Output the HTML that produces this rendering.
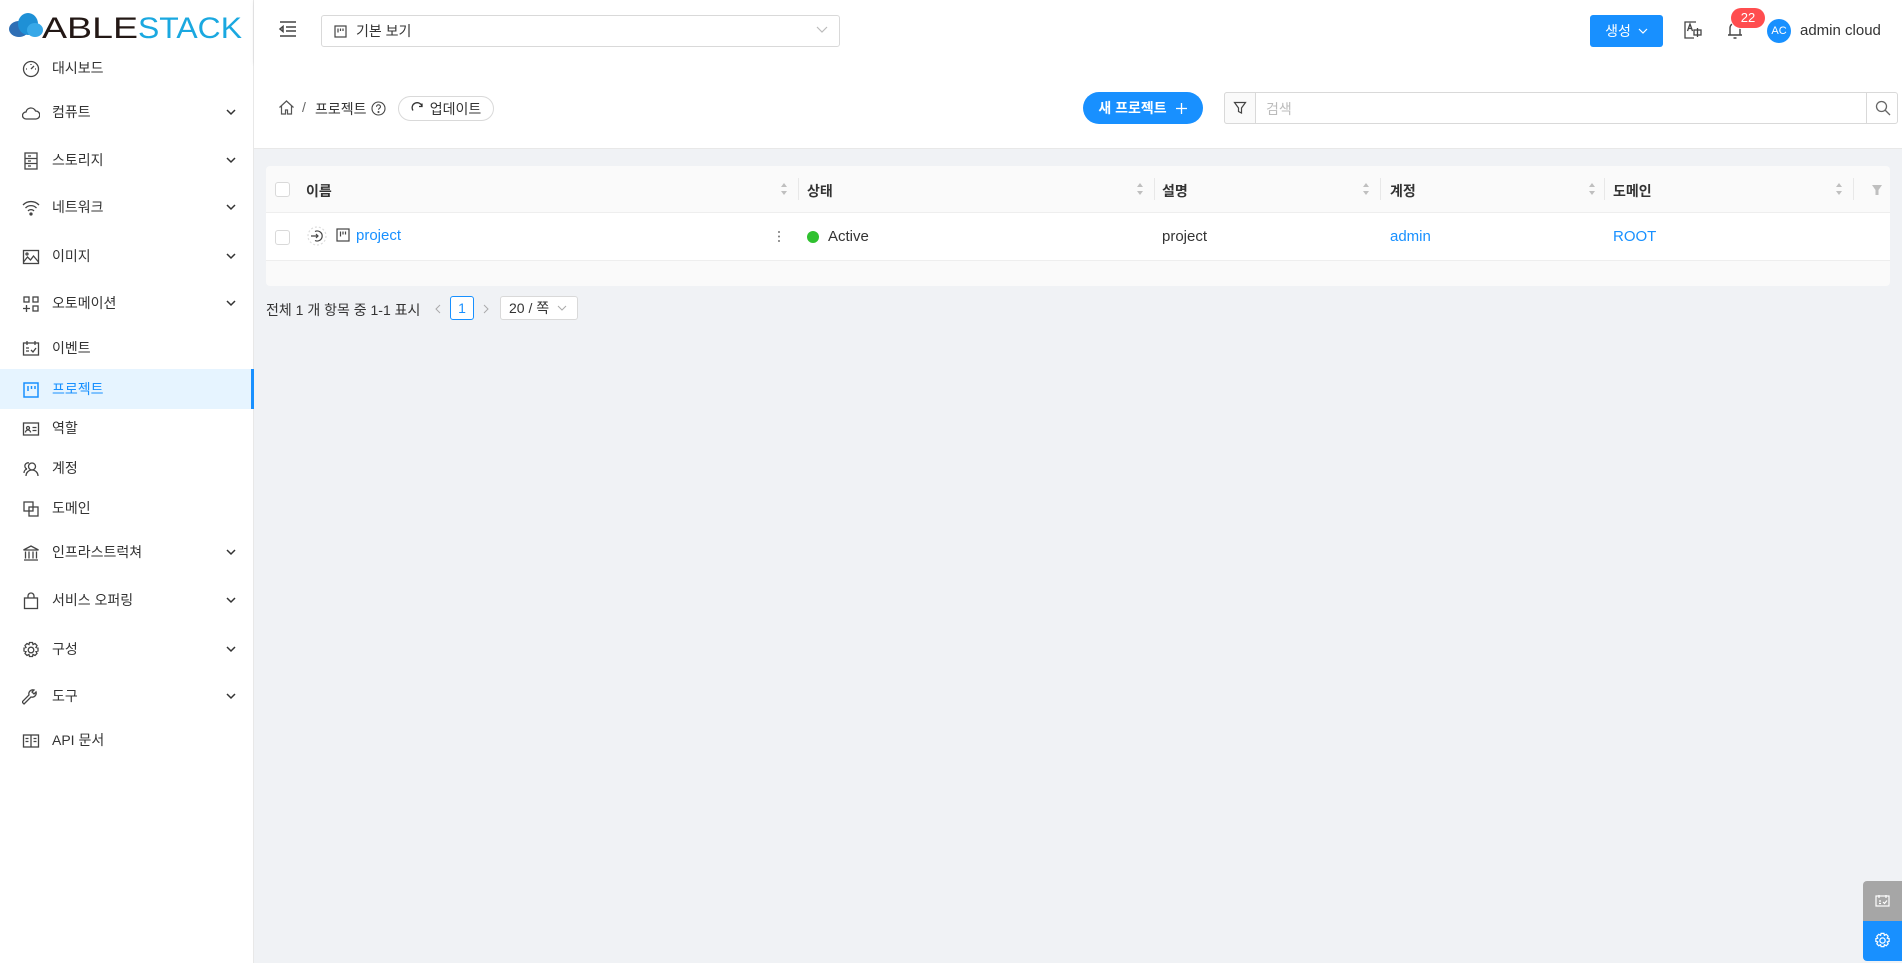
<!DOCTYPE html>
<html><head><meta charset="utf-8"><style>
*{box-sizing:border-box;margin:0;padding:0}
body{width:1902px;height:963px;background:#f0f2f5;font-family:"Liberation Sans","Noto Sans CJK KR",sans-serif;font-size:14px;color:#333;position:relative;overflow:hidden}
.a{position:absolute}
.side{left:0;top:0;width:254px;height:963px;background:#fff;border-right:1px solid #e8e8e8}
.it{position:absolute;left:0;width:254px;height:40px;display:flex;align-items:center;padding-left:52px;color:#333;font-size:14px}
.it svg.ic{position:absolute;left:22px;top:12px}
.chev{position:absolute;left:226px;top:15px}
.act{background:#e6f4ff;color:#1890ff;border-right:3px solid #1890ff}
.hdr{left:254px;top:0;width:1648px;height:63px;background:#fff;box-shadow:0 1px 4px rgba(0,21,41,.08)}
.blue{color:#1890ff}
</style></head><body>
<div class="a side">
 <div class="a" style="left:6px;top:10px;width:240px;height:30px">
  <svg width="240" height="30" viewBox="0 0 240 30"><ellipse cx="13" cy="19" rx="10" ry="8" fill="#2f6fb5"/><ellipse cx="22" cy="14" rx="10" ry="11" fill="#1e90d6"/><ellipse cx="29" cy="20" rx="8" ry="7" fill="#37a8e8"/>
  <text x="36" y="28" font-family="Liberation Sans" font-size="30" fill="#231815" textLength="96" lengthAdjust="spacingAndGlyphs">ABLE</text><text x="132" y="28" font-family="Liberation Sans" font-size="30" fill="#1aa8e0" textLength="104" lengthAdjust="spacingAndGlyphs">STACK</text></svg>
 </div>
 <div class="it" style="top:48px"><svg class="ic" width="18" height="18" viewBox="0 0 18 18" fill="none" stroke="#444" stroke-width="1.3"><circle cx="9" cy="9" r="7.5"/><path d="M9 9l3-3M4 9h1M13 9h1M9 4v1"/></svg>대시보드</div>
 <div class="it" style="top:92px"><svg class="ic" width="18" height="18" viewBox="0 0 18 18" fill="none" stroke="#444" stroke-width="1.3"><path d="M4 15a3.5 3.5 0 010-7 5 5 0 019.5-1A4 4 0 0114 15z"/></svg>컴퓨트<svg class="chev" width="10" height="10" viewBox="0 0 10 10"><path d="M1 3l4 4 4-4" stroke="#333" stroke-width="1.5" fill="none"/></svg></div>
 <div class="it" style="top:140px"><svg class="ic" width="18" height="18" viewBox="0 0 18 18" fill="none" stroke="#444" stroke-width="1.3"><rect x="3" y="1" width="12" height="16"/><path d="M3 6.5h12M3 11.5h12M6 4h3M6 9h3M6 14h3"/></svg>스토리지<svg class="chev" width="10" height="10" viewBox="0 0 10 10"><path d="M1 3l4 4 4-4" stroke="#333" stroke-width="1.5" fill="none"/></svg></div>
 <div class="it" style="top:187px"><svg class="ic" width="18" height="18" viewBox="0 0 18 18" fill="none" stroke="#444" stroke-width="1.3"><path d="M1 6a11 11 0 0116 0M3.5 9a7.5 7.5 0 0111 0M6 12a4 4 0 016 0"/><circle cx="9" cy="15" r="1" fill="#444"/></svg>네트워크<svg class="chev" width="10" height="10" viewBox="0 0 10 10"><path d="M1 3l4 4 4-4" stroke="#333" stroke-width="1.5" fill="none"/></svg></div>
 <div class="it" style="top:236px"><svg class="ic" width="18" height="18" viewBox="0 0 18 18" fill="none" stroke="#444" stroke-width="1.3"><rect x="1.5" y="2.5" width="15" height="13"/><path d="M1.5 14l4-5 3 3 3-4 5 6"/><circle cx="5" cy="6" r="1"/></svg>이미지<svg class="chev" width="10" height="10" viewBox="0 0 10 10"><path d="M1 3l4 4 4-4" stroke="#333" stroke-width="1.5" fill="none"/></svg></div>
 <div class="it" style="top:283px"><svg class="ic" width="18" height="18" viewBox="0 0 18 18" fill="none" stroke="#444" stroke-width="1.3"><rect x="2" y="2" width="5" height="5"/><rect x="11" y="2" width="5" height="5"/><rect x="11" y="11" width="5" height="5"/><path d="M4.5 10v7M1 13.5h7"/></svg>오토메이션<svg class="chev" width="10" height="10" viewBox="0 0 10 10"><path d="M1 3l4 4 4-4" stroke="#333" stroke-width="1.5" fill="none"/></svg></div>
 <div class="it" style="top:328px"><svg class="ic" width="18" height="18" viewBox="0 0 18 18" fill="none" stroke="#444" stroke-width="1.3"><rect x="1.5" y="3" width="15" height="12"/><path d="M5 1v4M13 1v4M4 8h3M4 11h3M9 10l2 2 3-4"/></svg>이벤트</div>
 <div class="it act" style="top:369px"><svg class="ic" width="18" height="18" viewBox="0 0 18 18" fill="none" stroke="#1890ff" stroke-width="1.5"><rect x="2" y="2" width="14" height="14"/><path d="M6 5v5M9.5 5v3M13 5v3"/></svg>프로젝트</div>
 <div class="it" style="top:408px"><svg class="ic" width="18" height="18" viewBox="0 0 18 18" fill="none" stroke="#444" stroke-width="1.3"><rect x="1.5" y="3" width="15" height="12"/><circle cx="6" cy="8" r="1.5"/><path d="M3.5 12.5a2.5 2.5 0 015 0M10.5 7.5h4M10.5 10.5h4"/></svg>역할</div>
 <div class="it" style="top:448px"><svg class="ic" width="18" height="18" viewBox="0 0 18 18" fill="none" stroke="#444" stroke-width="1.3"><circle cx="10" cy="6.5" r="3.5"/><path d="M4 16a6 6 0 0112 0M5 9a3 3 0 012-6M2 13a4 4 0 013-4"/></svg>계정</div>
 <div class="it" style="top:488px"><svg class="ic" width="18" height="18" viewBox="0 0 18 18" fill="none" stroke="#444" stroke-width="1.3"><rect x="2" y="2" width="9" height="9"/><rect x="7" y="7" width="9" height="9"/></svg>도메인</div>
 <div class="it" style="top:532px"><svg class="ic" width="18" height="18" viewBox="0 0 18 18" fill="none" stroke="#444" stroke-width="1.3"><path d="M1.5 6L9 2l7.5 4zM2 16h14M3.5 7.5v7M7 7.5v7M11 7.5v7M14.5 7.5v7"/></svg>인프라스트럭쳐<svg class="chev" width="10" height="10" viewBox="0 0 10 10"><path d="M1 3l4 4 4-4" stroke="#333" stroke-width="1.5" fill="none"/></svg></div>
 <div class="it" style="top:580px"><svg class="ic" width="18" height="18" viewBox="0 0 18 18" fill="none" stroke="#444" stroke-width="1.3"><rect x="2.5" y="6" width="13" height="10.5"/><path d="M6 6V4a3 3 0 016 0v2"/></svg>서비스 오퍼링<svg class="chev" width="10" height="10" viewBox="0 0 10 10"><path d="M1 3l4 4 4-4" stroke="#333" stroke-width="1.5" fill="none"/></svg></div>
 <div class="it" style="top:629px"><svg class="ic" width="18" height="18" viewBox="0 0 18 18" fill="none" stroke="#444" stroke-width="1.3"><circle cx="9" cy="9" r="2.8"/><path d="M7.5 1.5h3l.5 2 2-1 2 2-1 2 2 .5v3l-2 .5 1 2-2 2-2-1-.5 2h-3l-.5-2-2 1-2-2 1-2-2-.5v-3l2-.5-1-2 2-2 2 1z"/></svg>구성<svg class="chev" width="10" height="10" viewBox="0 0 10 10"><path d="M1 3l4 4 4-4" stroke="#333" stroke-width="1.5" fill="none"/></svg></div>
 <div class="it" style="top:676px"><svg class="ic" width="18" height="18" viewBox="0 0 18 18" fill="none" stroke="#444" stroke-width="1.3"><path d="M2 16l7-7a4 4 0 005-5l-2 2-2-2 2-2a4 4 0 00-5 5l-7 7z"/></svg>도구<svg class="chev" width="10" height="10" viewBox="0 0 10 10"><path d="M1 3l4 4 4-4" stroke="#333" stroke-width="1.5" fill="none"/></svg></div>
 <div class="it" style="top:720px"><svg class="ic" width="18" height="18" viewBox="0 0 18 18" fill="none" stroke="#444" stroke-width="1.3"><rect x="1.5" y="3" width="15" height="12"/><path d="M9 3v12M3.5 6.5h3M3.5 9.5h3M11.5 6.5h3M11.5 9.5h3"/></svg>API 문서</div>
</div>

<div class="a hdr"></div>
<svg class="a" style="left:278px;top:19px" width="20" height="20" viewBox="0 0 20 20" fill="none" stroke="#444" stroke-width="1.5"><path d="M2 3h16M8 8h10M8 12h10M2 17h16M5 7.5L2 10l3 2.5z"/></svg>
<div class="a" style="left:321px;top:15px;width:519px;height:32px;border:1px solid #d9d9d9;border-radius:3px;background:#fff"></div>
<svg class="a" style="left:334px;top:25px" width="13" height="13" viewBox="0 0 13 13" fill="none" stroke="#444" stroke-width="1.2"><rect x="1" y="1" width="11" height="11"/><path d="M4 3.5v4M6.5 3.5v2.5M9 3.5v2.5"/></svg>
<div class="a" style="left:356px;top:21px;font-size:14px;color:#333">기본 보기</div>
<svg class="a" style="left:816px;top:25px" width="12" height="10" viewBox="0 0 12 10"><path d="M1 2l5 5 5-5" stroke="#bbb" fill="none" stroke-width="1.2"/></svg>

<div class="a" style="left:1590px;top:15px;width:73px;height:32px;background:#1890ff;border-radius:3px;color:#fff;display:flex;align-items:center;justify-content:center;gap:7px;font-size:14px">생성 <svg width="10" height="8" viewBox="0 0 10 8"><path d="M1 2l4 4 4-4" stroke="#fff" fill="none" stroke-width="1.2"/></svg></div>
<svg class="a" style="left:1683px;top:20px" width="20" height="20" viewBox="0 0 20 20" fill="none" stroke="#444" stroke-width="1.3"><path d="M13 2H2v16h9"/><path d="M4.5 11l2.5-7 2.5 7M5.3 8.5h3.4"/><rect x="11" y="10" width="7" height="5"/><path d="M14.5 8v9"/></svg>
<svg class="a" style="left:1726px;top:20px" width="18" height="20" viewBox="0 0 18 20" fill="none" stroke="#444" stroke-width="1.4"><path d="M4 15V8a5 5 0 0110 0v7M2 15h14M7.5 18h3"/></svg>
<div class="a" style="left:1731px;top:8px;width:34px;height:20px;background:#ff4d4f;border-radius:10px;color:#fff;font-size:13px;text-align:center;line-height:20px;box-shadow:0 0 0 1px #fff">22</div>
<div class="a" style="left:1767px;top:19px;width:24px;height:24px;border-radius:50%;background:#1890ff;color:#fff;font-size:11px;text-align:center;line-height:24px">AC</div>
<div class="a" style="left:1800px;top:22px;font-size:15px;color:#333">admin cloud</div>

<div class="a" style="left:254px;top:63px;width:1648px;height:86px;background:#fff;border-bottom:1px solid #e8e8e8"></div>
<svg class="a" style="left:278px;top:99px" width="17" height="17" viewBox="0 0 17 17" fill="none" stroke="#555" stroke-width="1.2"><path d="M1.5 8.5L8.5 2l7 6.5M3.5 7v8h4v-4h2v4h4V7"/></svg>
<div class="a" style="left:302px;top:99px;color:#666">/</div>
<div class="a" style="left:315px;top:99px;color:#333">프로젝트</div>
<svg class="a" style="left:371px;top:101px" width="15" height="15" viewBox="0 0 15 15" fill="none" stroke="#444" stroke-width="1.1"><circle cx="7.5" cy="7.5" r="6.5"/><path d="M5.5 5.8a2 2 0 114 0c0 1.4-2 1.5-2 3"/><circle cx="7.5" cy="11" r=".5" fill="#444"/></svg>
<div class="a" style="left:398px;top:96px;width:96px;height:25px;border:1px solid #d9d9d9;border-radius:13px;background:#fff;display:flex;align-items:center;justify-content:center;gap:6px;font-size:14px"><svg width="13" height="13" viewBox="0 0 13 13" fill="none" stroke="#333" stroke-width="1.3"><path d="M11 4.5A5 5 0 102 8.5M11 1.5v3H8"/></svg>업데이트</div>

<div class="a" style="left:1083px;top:92px;width:120px;height:32px;background:#1890ff;border-radius:16px;color:#fff;display:flex;align-items:center;justify-content:center;gap:8px;font-size:14px;font-weight:bold">새 프로젝트 <svg width="13" height="13" viewBox="0 0 13 13"><path d="M6.5 1v11M1 6.5h11" stroke="#fff" stroke-width="1.3"/></svg></div>
<div class="a" style="left:1224px;top:92px;width:674px;height:32px;border:1px solid #d9d9d9;border-radius:3px;background:#fff"></div>
<div class="a" style="left:1224px;top:92px;width:32px;height:32px;border:1px solid #d9d9d9;background:#fafafa;border-radius:3px 0 0 3px"></div>
<svg class="a" style="left:1233px;top:101px" width="14" height="14" viewBox="0 0 14 14" fill="none" stroke="#444" stroke-width="1.2"><path d="M1.5 1.5h11L8.5 7v5l-3-1.5V7z"/></svg>
<div class="a" style="left:1266px;top:99px;color:#bbb">검색</div>
<div class="a" style="left:1866px;top:92px;width:1px;height:32px;background:#d9d9d9"></div>
<svg class="a" style="left:1875px;top:100px" width="16" height="16" viewBox="0 0 16 16" fill="none" stroke="#666" stroke-width="1.3"><circle cx="6.5" cy="6.5" r="5"/><path d="M10 10l5 5"/></svg>

<div class="a" style="left:266px;top:166px;width:1624px;height:120px;background:#fafafa;border-radius:4px"></div>
<div class="a" style="left:266px;top:212px;width:1624px;height:49px;background:#fff;border-top:1px solid #eee;border-bottom:1px solid #eee"></div>
<div class="a" style="left:275px;top:182px;width:15px;height:15px;border:1px solid #d9d9d9;border-radius:3px;background:#fff"></div>
<div class="a" style="left:275px;top:230px;width:15px;height:15px;border:1px solid #d9d9d9;border-radius:3px;background:#fff"></div>
<div class="a" style="left:306px;top:181px;font-weight:bold;font-size:14px">이름</div>
<div class="a" style="left:807px;top:181px;font-weight:bold">상태</div>
<div class="a" style="left:1162px;top:181px;font-weight:bold">설명</div>
<div class="a" style="left:1390px;top:181px;font-weight:bold">계정</div>
<div class="a" style="left:1613px;top:181px;font-weight:bold">도메인</div>
<div class="a" style="left:798px;top:178px;width:1px;height:22px;background:#e8e8e8"></div>
<div class="a" style="left:1154px;top:178px;width:1px;height:22px;background:#e8e8e8"></div>
<div class="a" style="left:1380px;top:178px;width:1px;height:22px;background:#e8e8e8"></div>
<div class="a" style="left:1604px;top:178px;width:1px;height:22px;background:#e8e8e8"></div>
<div class="a" style="left:1853px;top:178px;width:1px;height:22px;background:#e8e8e8"></div>
<svg class="a" style="left:780px;top:182px" width="8" height="14" viewBox="0 0 8 14" fill="#bfbfbf"><path d="M4 1l3 4H1zM4 13l3-4H1z"/></svg>
<svg class="a" style="left:1136px;top:182px" width="8" height="14" viewBox="0 0 8 14" fill="#bfbfbf"><path d="M4 1l3 4H1zM4 13l3-4H1z"/></svg>
<svg class="a" style="left:1362px;top:182px" width="8" height="14" viewBox="0 0 8 14" fill="#bfbfbf"><path d="M4 1l3 4H1zM4 13l3-4H1z"/></svg>
<svg class="a" style="left:1588px;top:182px" width="8" height="14" viewBox="0 0 8 14" fill="#bfbfbf"><path d="M4 1l3 4H1zM4 13l3-4H1z"/></svg>
<svg class="a" style="left:1835px;top:182px" width="8" height="14" viewBox="0 0 8 14" fill="#bfbfbf"><path d="M4 1l3 4H1zM4 13l3-4H1z"/></svg>
<svg class="a" style="left:1871px;top:184px" width="12" height="12" viewBox="0 0 12 12" fill="#bfbfbf"><path d="M1 1h10L7.5 6v5h-3V6z"/></svg>

<svg class="a" style="left:307px;top:226px" width="20" height="20" viewBox="0 0 20 20" fill="none" stroke="#444" stroke-width="1.2"><circle cx="10" cy="10" r="9" stroke="#ddd" stroke-dasharray="2 2"/><path d="M8 5.5a5 5 0 110 9M4 10h7M9 8l2 2-2 2"/></svg>
<svg class="a" style="left:336px;top:228px" width="14" height="14" viewBox="0 0 14 14" fill="none" stroke="#444" stroke-width="1.2"><rect x="1" y="1" width="12" height="12"/><path d="M4.5 3.5v5M7 3.5v3M9.5 3.5v3"/></svg>
<div class="a blue" style="left:356px;top:227px;font-size:15px">project</div>
<svg class="a" style="left:777px;top:229px" width="4" height="15" viewBox="0 0 4 15" fill="#777"><circle cx="2" cy="3" r="1"/><circle cx="2" cy="7.5" r="1"/><circle cx="2" cy="12" r="1"/></svg>
<div class="a" style="left:807px;top:231px;width:12px;height:12px;border-radius:50%;background:#2fc12f"></div>
<div class="a" style="left:828px;top:228px;font-size:15px">Active</div>
<div class="a" style="left:1162px;top:228px;font-size:15px">project</div>
<div class="a blue" style="left:1390px;top:228px;font-size:15px">admin</div>
<div class="a blue" style="left:1613px;top:228px;font-size:15px">ROOT</div>

<div class="a" style="left:266px;top:300px;font-size:14px">전체 1 개 항목 중 1-1 표시</div>
<svg class="a" style="left:434px;top:304px" width="8" height="10" viewBox="0 0 8 10"><path d="M6 1L2 5l4 4" stroke="#aaa" fill="none"/></svg>
<div class="a" style="left:450px;top:296px;width:24px;height:24px;border:1px solid #1890ff;border-radius:3px;background:#fff;color:#1890ff;text-align:center;line-height:22px">1</div>
<svg class="a" style="left:482px;top:304px" width="8" height="10" viewBox="0 0 8 10"><path d="M2 1l4 4-4 4" stroke="#aaa" fill="none"/></svg>
<div class="a" style="left:500px;top:296px;width:78px;height:24px;border:1px solid #d9d9d9;border-radius:3px;background:#fff;line-height:22px;padding-left:8px">20 / 쪽 <svg style="position:absolute;left:56px;top:7px" width="10" height="8" viewBox="0 0 10 8"><path d="M1 2l4 4 4-4" stroke="#aaa" fill="none"/></svg></div>

<div class="a" style="left:1863px;top:881px;width:39px;height:40px;background:#a6a6a6;border-radius:4px 0 0 0"></div>
<svg class="a" style="left:1875px;top:894px" width="15" height="14" viewBox="0 0 15 14" fill="none" stroke="#fff" stroke-width="1.2"><rect x="1" y="2" width="13" height="10"/><path d="M4 1v3M11 1v3M4 7h2M4 9.5h2M8 8l1.5 1.5L12 6.5"/></svg>
<div class="a" style="left:1863px;top:921px;width:39px;height:40px;background:#1890ff;border-radius:0 0 0 4px"></div>
<svg class="a" style="left:1874px;top:932px" width="17" height="17" viewBox="0 0 18 18" fill="none" stroke="#fff" stroke-width="1.3"><circle cx="9" cy="9" r="2.8"/><path d="M7.5 1.5h3l.5 2 2-1 2 2-1 2 2 .5v3l-2 .5 1 2-2 2-2-1-.5 2h-3l-.5-2-2 1-2-2 1-2-2-.5v-3l2-.5-1-2 2-2 2 1z"/></svg>
</body></html>
